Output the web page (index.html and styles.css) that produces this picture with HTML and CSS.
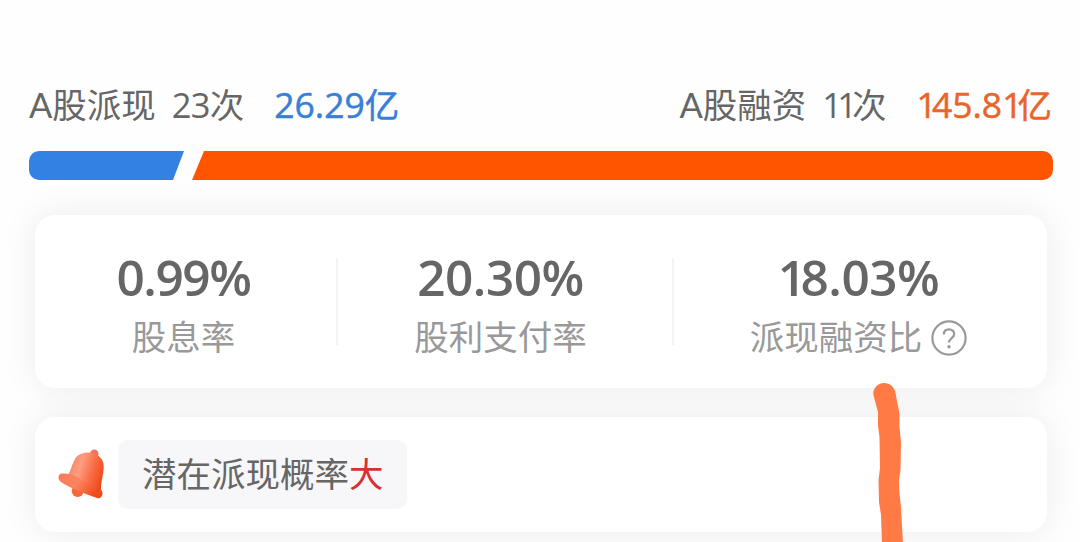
FILE: index.html
```html
<!DOCTYPE html>
<html lang="zh-CN">
<head>
  <meta charset="UTF-8" />
  <meta name="viewport" content="width=device-width, initial-scale=1.0"/>
  <title>派现融资</title>
  <link rel="stylesheet" href="styles.css">
</head>
<body>
  <!-- SUMMARY -->
  <div class="summary">
    <div class="summary-group">
      <span class="name">A股派现</span>
      <span class="times"><span class="num">23</span>次</span>
      <span class="amount blue"><span class="num">26.29</span>亿</span>
    </div>
    <div class="summary-group">
      <span class="name">A股融资</span>
      <span class="times"><span class="num"><span class="one">11</span></span>次</span>
      <span class="amount orange"><span class="num"><span class="one">1</span>45.8<span class="one">1</span></span>亿</span>
    </div>
  </div>

  <!-- RATIO BAR -->
  <div class="ratio-bar">
    <div class="bar-blue" style="width: 155px"></div>
    <div class="bar-orange"></div>
  </div>

  <!-- STATS -->
  <div class="card stats">
    <div class="stat">
      <div class="value yield">0.99%</div>
      <div class="label">股息率</div>
    </div>
    <div class="stat payout">
      <div class="value">20.30%</div>
      <div class="label">股利支付率</div>
    </div>
    <div class="stat">
      <div class="value"><span class="one">1</span>8.03%</div>
      <div class="label">派现融资比
        <svg class="help" viewBox="0 0 36 36">
          <circle cx="18" cy="18" r="16.6"/>
          <path d="M12.8 14.6C12.8 11.2 15 9.4 18 9.4c3 0 5.2 1.9 5.2 4.6 0 4.2-5.2 4-5.2 8.4"/>
          <circle class="dot" cx="18" cy="26.8" r="1.7"/>
        </svg>
      </div>
    </div>
  </div>

  <!-- NOTICE -->
  <div class="card notice">
    <svg class="bell" viewBox="0 0 48 52">
      <defs>
        <linearGradient id="body" x1="0" y1="0.25" x2="1" y2="0.6">
          <stop offset="0" stop-color="#f4825f"/>
          <stop offset="0.35" stop-color="#ff9c82"/>
          <stop offset="0.65" stop-color="#fb7048"/>
          <stop offset="1" stop-color="#ef4716"/>
        </linearGradient>
        <linearGradient id="rim" x1="0" y1="0" x2="1" y2="0.4">
          <stop offset="0" stop-color="#f77a55"/>
          <stop offset="0.5" stop-color="#fd8460"/>
          <stop offset="1" stop-color="#ef4c1e"/>
        </linearGradient>
      </defs>
      <circle cx="19.7" cy="42" r="6" fill="#f4683a"/>
      <circle cx="36.3" cy="4.8" r="4.2" fill="#f0765a"/>
      <path d="M9 28C13 22 13.5 16 16.5 11C20 3.5 29 2.5 35.5 4.5C43 7 46.5 12 45.6 20C45 28 42.5 34 43 44L24 40Z" fill="url(#body)"/>
      <path d="M4 24.4C0 24.5-1 30 3 33C12 39 26 44.5 39 49C44 50.5 47 43 42 40C34 37 28 34 22 30C16 26 12 24.4 4 24.4Z" fill="url(#rim)"/>
    </svg>
    <div class="tag">潜在派现概率<span class="red">大</span></div>
  </div>

  <!-- MARKER STROKE -->
  <svg class="marker" viewBox="0 0 34 162">
    <path d="M.4 13C-.4 6 5 1 11 1C17 1 21.5 5 22.5 11L26.5 32L26.5 45L28 60L27.5 88L26 98L26.5 112L28 125L30 162H9L8 133L6 120L5.5 98L7 86L6.5 55L5 44L5 30Z"/>
  </svg>
</body>
</html>
```

FILE: styles.css
```css
* { margin: 0; padding: 0; box-sizing: border-box; }

body {
  height: 542px;
  padding: 80px 28px 0 29px;
  overflow: hidden;
  position: relative;
  background-color: #fefefe;
  color: #666;
  font-family: Lato, 'Noto Sans CJK SC', sans-serif;
  font-size: 34.5px;
}

.summary {
  display: flex;
  justify-content: space-between;
  height: 71px;
  line-height: 50px;
  white-space: nowrap;
}

.summary-group {
  display: flex;
}

.times {
  margin-left: 16px;
}

.num {
  font-family: 'Open Sans', sans-serif;
  letter-spacing: -0.8px;
}

.amount {
  height: 50px;
  margin-left: 30px;
  -webkit-text-stroke: 0.5px currentColor;
}

.amount .num {
  font-weight: 500;
  font-size: 35.5px;
  line-height: 48px;
  letter-spacing: 0;
}

/* the digit 1 is set tighter than the others */
.num .one {
  letter-spacing: -0.14em;
}

.value .one {
  letter-spacing: -0.11em;
}

.blue { color: #377fd9; }
.orange { color: #e8662b; }
.red { color: #d93030; }

.ratio-bar {
  display: flex;
  width: 1024px;
  height: 29px;
}

.bar-blue {
  background-color: #3381e3;
  border-radius: 10px 0 0 10px;
  clip-path: polygon(0 0, 100% 0, calc(100% - 11px) 100%, 0 100%);
}

.bar-orange {
  flex: 1;
  margin-left: 8px;
  background-color: #ff5500;
  border-radius: 0 10px 10px 0;
  clip-path: polygon(12px 0, 100% 0, 100% 100%, 0 100%);
}

.card {
  width: 1012px;
  margin-left: 6px;
  background-color: #fff;
  border-radius: 20px;
  box-shadow: 0 0 36px rgba(0, 0, 0, 0.075);
}

.stats {
  display: grid;
  grid-template-columns: 303px 336px 1fr;
  height: 173px;
  margin-top: 35px;
  padding: 43px 0;
}

.stat {
  height: 87px;
  padding-right: 4px;
  text-align: center;
  border-right: 2px solid #f3f3f3;
}

.stat.payout {
  padding-right: 9px;
}

.stat:last-child {
  border-right: none;
}

.value {
  height: 53px;
  line-height: 38px;
  font-family: 'Open Sans', sans-serif;
  font-size: 49.5px;
  font-weight: 600;
  letter-spacing: -0.5px;
}

.value.yield {
  letter-spacing: -1.4px;
}

.label {
  display: flex;
  justify-content: center;
  height: 50px;
  line-height: 51px;
  color: #999;
}

.help {
  width: 36px;
  height: 36px;
  margin: 9px 0 0 9px;
  fill: none;
  stroke: #999;
  stroke-width: 2.2;
}

.help .dot {
  fill: #999;
  stroke: none;
}

.notice {
  display: flex;
  height: 115px;
  margin-top: 29px;
  padding: 23px;
}

.bell {
  width: 48px;
  height: 52px;
  margin: 9px 12px 0 0;
}

.tag {
  width: 289px;
  height: 69px;
  padding-left: 24px;
  line-height: 68px;
  white-space: nowrap;
  background-color: #f7f7fa;
  border-radius: 10px;
}

/* hand drawn line over the cards */
.marker {
  position: absolute;
  left: 873px;
  top: 382px;
  width: 34px;
  height: 162px;
  fill: #ff7a45;
}
```
